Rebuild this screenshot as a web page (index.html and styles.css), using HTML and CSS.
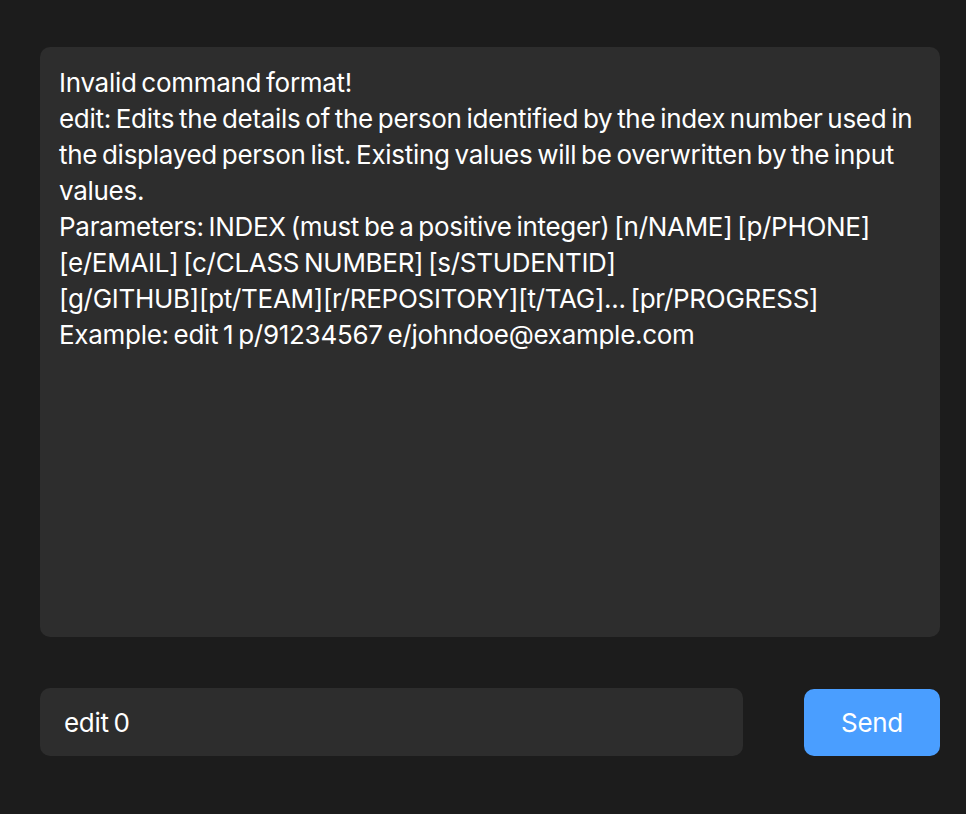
FILE: index.html
```html
<!DOCTYPE html>
<html lang="en">
<head>
<meta charset="utf-8">
<title>Command</title>
<link rel="stylesheet" href="styles.css">
</head>
<body>
<main class="app">
  <section class="result">
    <p class="result-text">
      <span class="line">Invalid command format!</span>
      <span class="line">edit: Edits the details of the person identified by the index number used in</span>
      <span class="line">the displayed person list. Existing values will be overwritten by the input</span>
      <span class="line">values.</span>
      <span class="line">Parameters: INDEX (must be a positive integer) [n/NAME] [p/PHONE]</span>
      <span class="line">[e/EMAIL] [c/CLASS NUMBER] [s/STUDENTID]</span>
      <span class="line">[g/GITHUB][pt/TEAM][r/REPOSITORY][t/TAG]... [pr/PROGRESS]</span>
      <span class="line">Example: edit 1 p/91234567 e/johndoe@example.com</span>
    </p>
  </section>
  <form class="command-bar" onsubmit="return false">
    <div class="command-input">edit 0</div>
    <button class="send" type="button">Send</button>
  </form>
</main>
</body>
</html>
```
FILE: styles.css
```css
html, body {
  margin: 0;
  padding: 0;
  background: #1c1c1c;
  height: 100%;
}
body {
  font-family: Inter, "Noto Sans", sans-serif;
  color: #ffffff;
}
.app {
  padding: 47px 26px 0 40px;
  display: flex;
  flex-direction: column;
}
.result {
  background: #2d2d2d;
  border-radius: 10px;
  height: 590px;
  padding: 18px 20px 0 19px;
  box-sizing: border-box;
}
.result-text {
  margin: 0;
  font-size: 26px;
  line-height: 36px;
  letter-spacing: -0.29px;
  word-spacing: -2.2px;
}
.line {
  display: block;
  white-space: nowrap;
}
.command-bar {
  margin: 51px 0 0 0;
  display: flex;
  align-items: flex-start;
  gap: 61px;
}
.command-input {
  flex: 0 0 703px;
  height: 68px;
  box-sizing: border-box;
  background: #2d2d2d;
  border-radius: 10px;
  padding: 0 24px;
  display: flex;
  align-items: center;
  font-size: 26px;
  letter-spacing: -0.3px;
  word-spacing: -2.2px;
}
.send {
  margin-top: 1px;
  width: 137px;
  height: 67px;
  border: none;
  border-radius: 10px;
  background: #4a9eff;
  color: #ffffff;
  font-family: Inter, "Noto Sans", sans-serif;
  font-size: 26px;
  letter-spacing: -0.3px;
  padding: 0;
}
```
